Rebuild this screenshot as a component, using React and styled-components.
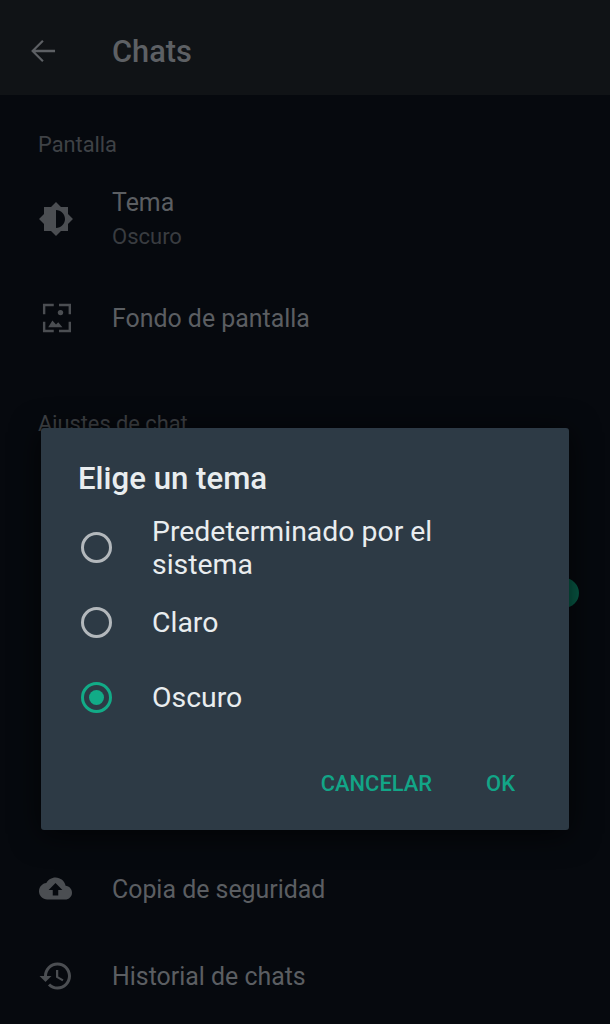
import React from "react";
import styled, { createGlobalStyle } from "styled-components";

const GlobalStyle = createGlobalStyle`
  html, body {
    margin: 0;
    padding: 0;
    background: #06090e;
  }
  * {
    box-sizing: border-box;
  }
`;

const Screen = styled.div`
  position: relative;
  width: 610px;
  height: 1024px;
  overflow: hidden;
  background: #06090e;
  font-family: Roboto, "Liberation Sans", sans-serif;
`;

const Header = styled.header`
  height: 95px;
  padding-top: 7px;
  display: flex;
  align-items: center;
  background: #101316;
  color: #5d6064;
`;

const BackButton = styled.div`
  width: 112px;
  padding-left: 26px;
  display: flex;
  align-items: center;
`;

const Title = styled.h1`
  margin: 2px 0 0;
  font-size: 30.8px;
  font-weight: 500;
  line-height: 36px;
`;

const Content = styled.main`
  padding-top: 35px;
  display: flex;
  flex-direction: column;
`;

const SectionLabel = styled.div`
  height: 30px;
  margin-top: ${(p) => p.$top || 0}px;
  padding-left: 38px;
  font-size: 21.8px;
  font-weight: 400;
  line-height: 30px;
  color: #3f4246;
`;

const Row = styled.div`
  height: ${(p) => p.$height}px;
  margin-top: ${(p) => p.$top || 0}px;
  display: flex;
  align-items: center;
`;

const IconCell = styled.div`
  width: 112px;
  flex: none;
  padding-left: ${(p) => p.$left || 38}px;
  display: flex;
  align-items: center;
  color: #4b4e52;
`;

const RowText = styled.div`
  display: flex;
  flex-direction: column;
`;

const RowTitle = styled.div`
  font-size: 24.9px;
  line-height: 35px;
  position: relative;
  top: ${(p) => p.$nudge ?? 1}px;
  color: #5b5e62;
`;

const RowSub = styled.div`
  font-size: 22px;
  line-height: 35px;
  color: #393c40;
`;

const SwitchRow = styled.div`
  height: 308px;
  display: flex;
  align-items: flex-start;
  justify-content: flex-end;
  padding: 139px 31px 0 0;
`;

const SwitchKnob = styled.div`
  width: 30px;
  height: 30px;
  border-radius: 50%;
  background: #075a46;
`;

const Dialog = styled.section`
  position: absolute;
  left: 41px;
  top: 428px;
  width: 528px;
  height: 402px;
  border-radius: 3px;
  background: #2d3a45;
  box-shadow: 0 4px 30px rgba(0, 0, 0, 0.7);
  display: flex;
  flex-direction: column;
  padding: 33px 0 0 38px;
`;

const DialogTitle = styled.h2`
  margin: 0 0 0 -1px;
  height: 36px;
  font-size: 31.2px;
  font-weight: 500;
  line-height: 36px;
  color: #e9edef;
`;

const Options = styled.div`
  margin-top: 12px;
  display: flex;
  flex-direction: column;
`;

const Option = styled.div`
  height: ${(p) => p.$height}px;
  display: flex;
  align-items: center;
  gap: 40px;
  padding-left: 2px;
`;

const Radio = styled.span`
  width: 31px;
  height: 31px;
  flex: none;
  border-radius: 50%;
  border: 3px solid ${(p) => (p.$checked ? "#12ab87" : "#b3b8bc")};
  display: flex;
  align-items: center;
  justify-content: center;

  &::after {
    content: "";
    display: ${(p) => (p.$checked ? "block" : "none")};
    width: 15px;
    height: 15px;
    border-radius: 50%;
    background: #12ab87;
  }
`;

const OptionLabel = styled.span`
  font-size: 28.4px;
  line-height: 33px;
  color: #e9edef;
  width: 320px;
  position: relative;
  top: ${(p) => p.$nudge || 0}px;
`;

const Actions = styled.div`
  margin-top: 34px;
  display: flex;
  justify-content: flex-end;
  gap: 54px;
  padding-right: 54px;
`;

const ActionButton = styled.span`
  font-size: 21.9px;
  font-weight: 500;
  line-height: 30px;
  color: #12a587;
`;

const BackIcon = () => (
  <svg width="34" height="34" viewBox="0 0 24 24" fill="currentColor">
    <path d="M20.5 11.2H6.6l5.9-5.9-1.1-1.1-7.8 7.8 7.8 7.8 1.1-1.1-5.9-5.9h13.9z" />
  </svg>
);

const ThemeIcon = () => (
  <svg width="36" height="36" viewBox="0 0 24 24" fill="currentColor">
    <path
      fillRule="evenodd"
      d="M20 8.69V4h-4.69L12 .69 8.69 4H4v4.69L.69 12 4 15.31V20h4.69L12 23.31 15.31 20H20v-4.69L23.31 12 20 8.69zM12 6v12c3.31 0 6-2.69 6-6s-2.69-6-6-6z"
    />
  </svg>
);

const WallpaperIcon = () => (
  <svg width="36" height="36" viewBox="0 0 24 24" fill="currentColor">
    <path d="M3.3 2.5h7.2v1.6H4.9v5.4H3.3zM14 2.5h8v7h-1.6V4.1H14zM3.3 14.5h1.6v5.4h5.6v1.6H3.3zM20.4 14.5H22v7h-8v-1.6h6.4z" />
    <circle cx="15" cy="8.4" r="1.8" />
    <path d="M6.8 18.2l2.8-4.6 2.4 2.8 1.5-1.6 2.8 3.4z" />
  </svg>
);

const BackupIcon = () => (
  <svg width="33" height="33" viewBox="0 0 24 24" fill="currentColor">
    <path d="M19.35 10.04C18.67 6.59 15.64 4 12 4 9.11 4 6.6 5.64 5.35 8.04 2.34 8.36 0 10.91 0 14c0 3.31 2.69 6 6 6h13c2.76 0 5-2.24 5-5 0-2.64-2.05-4.78-4.65-4.96zM14 13v4h-4v-4H7l5-5 5 5h-3z" />
  </svg>
);

const HistoryIcon = () => (
  <svg width="36" height="36" viewBox="0 0 24 24" fill="currentColor">
    <path d="M13 3c-4.97 0-9 4.03-9 9H1l3.89 3.89.07.14L9 12H6c0-3.87 3.13-7 7-7s7 3.13 7 7-3.13 7-7 7c-1.93 0-3.68-.79-4.94-2.06l-1.42 1.42C8.27 19.99 10.51 21 13 21c4.97 0 9-4.03 9-9s-4.03-9-9-9zm-1 5v5l4.28 2.54.72-1.21-3.5-2.08V8H12z" />
  </svg>
);

const themes = [
  { label: "Predeterminado por el sistema", height: 76, nudge: 1 },
  { label: "Claro", height: 75 },
  { label: "Oscuro", height: 75, checked: true },
];

export default function App() {
  return (
    <Screen>
      <GlobalStyle />
      <Header>
        <BackButton>
          <BackIcon />
        </BackButton>
        <Title>Chats</Title>
      </Header>
      <Content>
        <SectionLabel>Pantalla</SectionLabel>
        <Row $height={98} $top={10}>
          <IconCell>
            <ThemeIcon />
          </IconCell>
          <RowText>
            <RowTitle>Tema</RowTitle>
            <RowSub>Oscuro</RowSub>
          </RowText>
        </Row>
        <Row $height={98} $top={1}>
          <IconCell>
            <WallpaperIcon />
          </IconCell>
          <RowTitle $nudge={0}>Fondo de pantalla</RowTitle>
        </Row>
        <SectionLabel $top={42}>Ajustes de chat</SectionLabel>
        <SwitchRow>
          <SwitchKnob />
        </SwitchRow>
        <Row $height={87} $top={98}>
          <IconCell $left={39}>
            <BackupIcon />
          </IconCell>
          <RowTitle>Copia de seguridad</RowTitle>
        </Row>
        <Row $height={87}>
          <IconCell>
            <HistoryIcon />
          </IconCell>
          <RowTitle>Historial de chats</RowTitle>
        </Row>
      </Content>
      <Dialog>
        <DialogTitle>Elige un tema</DialogTitle>
        <Options>
          {themes.map((t) => (
            <Option key={t.label} $height={t.height}>
              <Radio $checked={t.checked} />
              <OptionLabel $nudge={t.nudge}>{t.label}</OptionLabel>
            </Option>
          ))}
        </Options>
        <Actions>
          <ActionButton>CANCELAR</ActionButton>
          <ActionButton>OK</ActionButton>
        </Actions>
      </Dialog>
    </Screen>
  );
}
